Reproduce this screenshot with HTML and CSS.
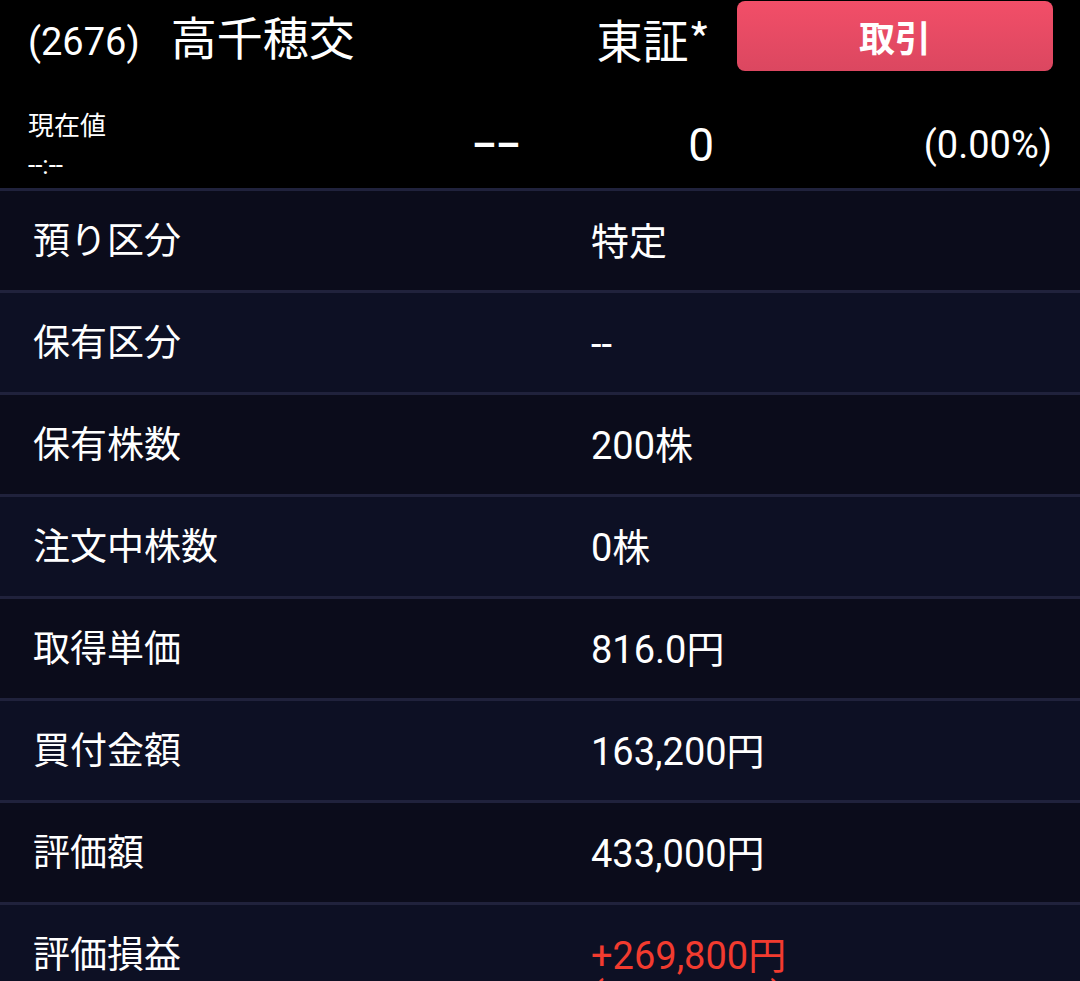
FILE: index.html
```html
<!DOCTYPE html>
<html>
  <head>
    <title>保有銘柄詳細</title>
    <link rel="stylesheet" href="styles.css">
  </head>
  <body>
    <div class="header">
      <div class="title-bar">
        <h1 class="stock-name"><span class="code">(2676)</span><span class="name">高千穂交</span></h1>
        <span class="market">東証*</span>
        <button class="trade-btn">取引</button>
      </div>
      <div class="quote">
        <div class="quote-label">
          <div class="label-main">現在値</div>
          <div class="label-time">--:--</div>
        </div>
        <div class="price">––</div>
        <div class="change">0</div>
        <div class="change-rate">(0.00%)</div>
      </div>
    </div>

    <div class="detail-list">
      <div class="row">
        <div class="row-label">預り区分</div>
        <div class="row-value">特定</div>
      </div>
      <div class="row">
        <div class="row-label">保有区分</div>
        <div class="row-value">--</div>
      </div>
      <div class="row">
        <div class="row-label">保有株数</div>
        <div class="row-value">200株</div>
      </div>
      <div class="row">
        <div class="row-label">注文中株数</div>
        <div class="row-value">0株</div>
      </div>
      <div class="row">
        <div class="row-label">取得単価</div>
        <div class="row-value">816.0円</div>
      </div>
      <div class="row">
        <div class="row-label">買付金額</div>
        <div class="row-value">163,200円</div>
      </div>
      <div class="row">
        <div class="row-label">評価額</div>
        <div class="row-value">433,000円</div>
      </div>
      <div class="row">
        <div class="row-label">評価損益</div>
        <div class="row-value plus">
          <div>+269,800円</div>
          <div class="sub">(+165.31%)</div>
        </div>
      </div>
    </div>
  </body>
</html>
```
FILE: styles.css
```css
* {
  margin: 0;
  padding: 0;
  box-sizing: border-box;
}

html,
body {
  width: 1080px;
  height: 981px;
  overflow: hidden;
}

body {
  background-color: #000;
  color: #fff;
  font-family: Roboto, "Noto Sans CJK JP", sans-serif;
}

.header {
  background-color: #000;
  height: 188px;
}

.title-bar {
  display: flex;
  align-items: center;
  height: 72px;
  padding: 0 27px 0 28px;
}

.stock-name {
  flex: 1;
  font-size: 46px;
  font-weight: 400;
  line-height: 52px;
  padding-top: 4px;
}

.stock-name .code {
  font-size: 38px;
}

.stock-name .name {
  font-family: "Noto Sans CJK JP", sans-serif;
  margin-left: 31px;
}

.market {
  font-family: "Noto Sans CJK JP", sans-serif;
  font-size: 46px;
  line-height: 52px;
  margin-right: 27px;
  padding-top: 4px;
}

.trade-btn {
  width: 316px;
  height: 70px;
  border: none;
  border-radius: 8px;
  background: linear-gradient(#f24e68, #db4760);
  color: #fff;
  font-family: "Noto Sans CJK JP", sans-serif;
  font-size: 36px;
  font-weight: 700;
  line-height: 40px;
}

.quote {
  display: grid;
  grid-template-columns: 1fr 100px 194px 338px;
  align-items: center;
  height: 116px;
  padding: 30px 28px 0 28px;
}

.label-main {
  font-size: 26px;
  line-height: 30px;
}

.label-time {
  font-size: 26px;
  line-height: 30px;
  margin-top: 9px;
}

.price {
  text-align: right;
  font-size: 38px;
  font-weight: 700;
}

.change {
  text-align: right;
  font-size: 46px;
}

.change-rate {
  text-align: right;
  font-size: 38px;
}

.row {
  display: grid;
  grid-template-columns: 558px 1fr;
  align-items: start;
  height: 102px;
  padding: 31px 0 0 33px;
  border-top: 3px solid #20223c;
  font-size: 37px;
  line-height: 40px;
}

.row-value {
  font-size: 38px;
}

.row:nth-child(odd) {
  background-color: #0b0c1b;
}

.row:nth-child(even) {
  background-color: #0d1024;
}

.plus {
  color: #f23b2f;
}
```
